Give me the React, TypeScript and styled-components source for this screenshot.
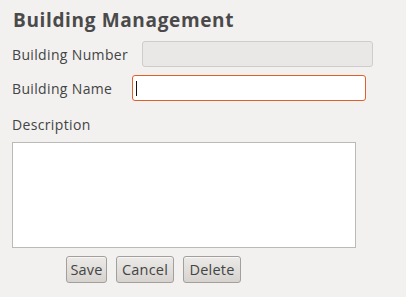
import styled, { createGlobalStyle } from "styled-components";

const GlobalStyle = createGlobalStyle`
    html, body {
        margin: 0;
        padding: 0;
        background: #f2f1f0;
    }
    body {
        font-family: "Open Sans", "DejaVu Sans", sans-serif;
        color: #3c3c3c;
    }
`;

const Page = styled.div`
    width: 406px;
    height: 297px;
    padding: 0 12px;
    box-sizing: border-box;
    display: flex;
    flex-direction: column;
`;

const Title = styled.h1`
    margin: 9px 0 0 1px;
    height: 22px;
    line-height: 22px;
    font-size: 19px;
    font-weight: 700;
    color: #4a4a4a;
    letter-spacing: 0.65px;
`;

const Row = styled.div<{ $top: number }>`
    display: flex;
    align-items: center;
    margin-top: ${(p) => p.$top}px;
    height: 26px;
`;

const Label = styled.label<{ $width: number }>`
    width: ${(p) => p.$width}px;
    flex: none;
    font-size: 14px;
    letter-spacing: 0.35px;
    color: #444;
`;

const Input = styled.div<{ $width: number; $state: "disabled" | "focus" }>`
    width: ${(p) => p.$width}px;
    height: 26px;
    box-sizing: border-box;
    border-radius: 3px;
    border: 1px solid ${(p) => (p.$state === "focus" ? "#e0602c" : "#cfcdca")};
    background: ${(p) => (p.$state === "focus" ? "#ffffff" : "#e9e8e6")};
    display: flex;
    align-items: center;
    padding-left: 3px;
`;

const Caret = styled.span`
    width: 1px;
    height: 15px;
    background: #111;
`;

const DescLabel = styled.div`
    margin-top: 15px;
    height: 18px;
    line-height: 18px;
    font-size: 14px;
    letter-spacing: 0.35px;
    color: #444;
`;

const TextArea = styled.div`
    margin-top: 8px;
    width: 344px;
    height: 106px;
    box-sizing: border-box;
    border: 1px solid #bcbab7;
    background: #fff;
`;

const Buttons = styled.div`
    display: flex;
    gap: 9px;
    margin: 8px 0 0 54px;
`;

const Button = styled.button<{ $width: number }>`
    width: ${(p) => p.$width}px;
    height: 27px;
    padding: 0;
    border: 1px solid #a3a09c;
    border-radius: 3px;
    background: linear-gradient(#eceae8, #d6d3cf);
    box-shadow: inset 0 1px 0 #f8f7f6;
    font-family: "Open Sans", "DejaVu Sans", sans-serif;
    font-size: 14.5px;
    letter-spacing: 0.2px;
    color: #444;
`;

export default function App() {
    return (
        <>
            <GlobalStyle />
            <Page>
                <Title>Building Management</Title>
                <Row $top={10}>
                    <Label $width={130}>Building Number</Label>
                    <Input $width={231} $state="disabled" />
                </Row>
                <Row $top={8}>
                    <Label $width={120}>Building Name</Label>
                    <Input $width={234} $state="focus">
                        <Caret />
                    </Input>
                </Row>
                <DescLabel>Description</DescLabel>
                <TextArea />
                <Buttons>
                    <Button $width={41}>Save</Button>
                    <Button $width={58}>Cancel</Button>
                    <Button $width={58}>Delete</Button>
                </Buttons>
            </Page>
        </>
    );
}
